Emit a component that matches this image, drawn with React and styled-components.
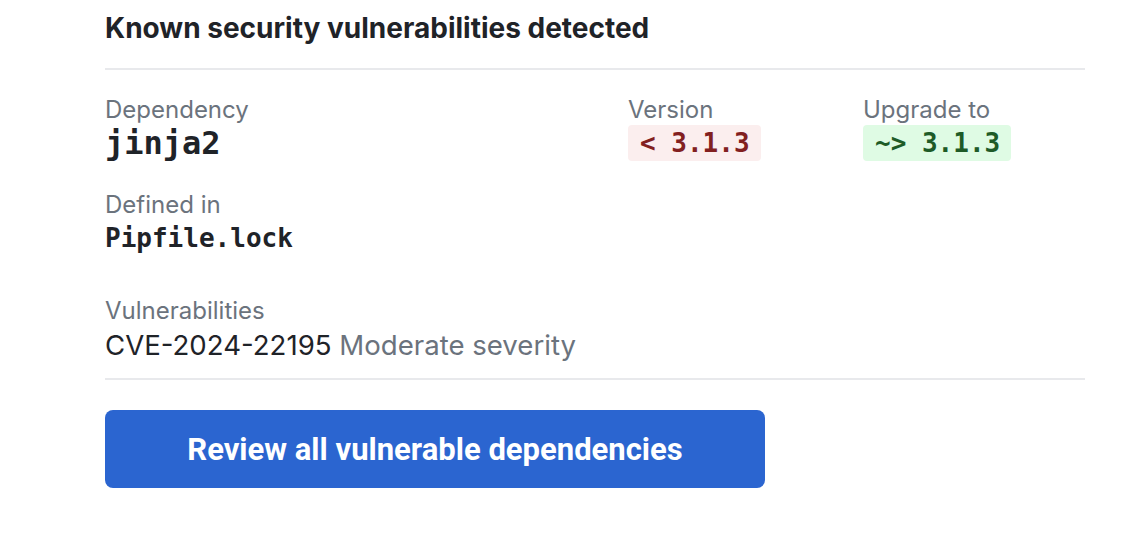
import styled, { createGlobalStyle } from "styled-components";

const GlobalStyle = createGlobalStyle`
  html, body {
    margin: 0;
    padding: 0;
    background: #ffffff;
  }
  body {
    font-family: Inter, "Liberation Sans", sans-serif;
    color: #1f2328;
  }
`;

const Panel = styled.section`
  width: 980px;
  margin-left: 105px;
  padding-top: 10px;
`;

const Title = styled.h2`
  margin: 0;
  font-size: 28px;
  line-height: 36px;
  font-weight: 700;
  color: #1f2328;
  padding-bottom: 22px;
  border-bottom: 2px solid #e8e9ec;
`;

const Details = styled.div`
  padding: 25px 0 14px;
  border-bottom: 2px solid #e8e9ec;
`;

const Grid = styled.div`
  display: grid;
  grid-template-columns: 523px 235px 1fr;
`;

const Field = styled.div`
  display: flex;
  flex-direction: column;
  align-items: flex-start;
  margin-bottom: ${(p) => p.$gap || 0}px;
`;

const Label = styled.div`
  font-size: 24px;
  line-height: 30px;
  color: #6b737d;
`;

const Mono = styled.div`
  font-family: "DejaVu Sans Mono", "Liberation Mono", monospace;
  font-weight: 700;
  font-size: ${(p) => p.$size || 26}px;
  line-height: 36px;
  color: #1f2328;
`;

const Badge = styled.span`
  font-family: "DejaVu Sans Mono", "Liberation Mono", monospace;
  font-weight: 700;
  font-size: 26px;
  line-height: 36px;
  padding: 0 11px 0 12px;
  border-radius: 4px;
  background: ${(p) => (p.$tone === "good" ? "#dffbe4" : "#fbeeee")};
  color: ${(p) => (p.$tone === "good" ? "#1e5b27" : "#82201f")};
`;

const Vuln = styled.div`
  font-size: 27.6px;
  line-height: 38px;
  color: #1f2328;
`;

const Severity = styled.span`
  color: #6b737d;
`;

const Button = styled.button`
  display: block;
  margin-top: 30px;
  width: 660px;
  height: 78px;
  padding: 0;
  border: none;
  border-radius: 8px;
  background: #2b65d0;
  color: #ffffff;
  font-family: Roboto, "Liberation Sans", sans-serif;
  font-weight: 700;
  font-size: 31px;
  cursor: pointer;
`;

const App = () => {
  return (
    <>
      <GlobalStyle />
      <Panel>
        <Title>Known security vulnerabilities detected</Title>
        <Details>
          <Grid>
            <Field $gap={29}>
              <Label>Dependency</Label>
              <Mono $size={32}>jinja2</Mono>
            </Field>
            <Field>
              <Label>Version</Label>
              <Badge>&lt; 3.1.3</Badge>
            </Field>
            <Field>
              <Label>Upgrade to</Label>
              <Badge $tone="good">~&gt; 3.1.3</Badge>
            </Field>
          </Grid>
          <Field $gap={40}>
            <Label>Defined in</Label>
            <Mono>Pipfile.lock</Mono>
          </Field>
          <Field>
            <Label>Vulnerabilities</Label>
            <Vuln>
              CVE-2024-22195 <Severity>Moderate severity</Severity>
            </Vuln>
          </Field>
        </Details>
        <Button>Review all vulnerable dependencies</Button>
      </Panel>
    </>
  );
};

export default App;
